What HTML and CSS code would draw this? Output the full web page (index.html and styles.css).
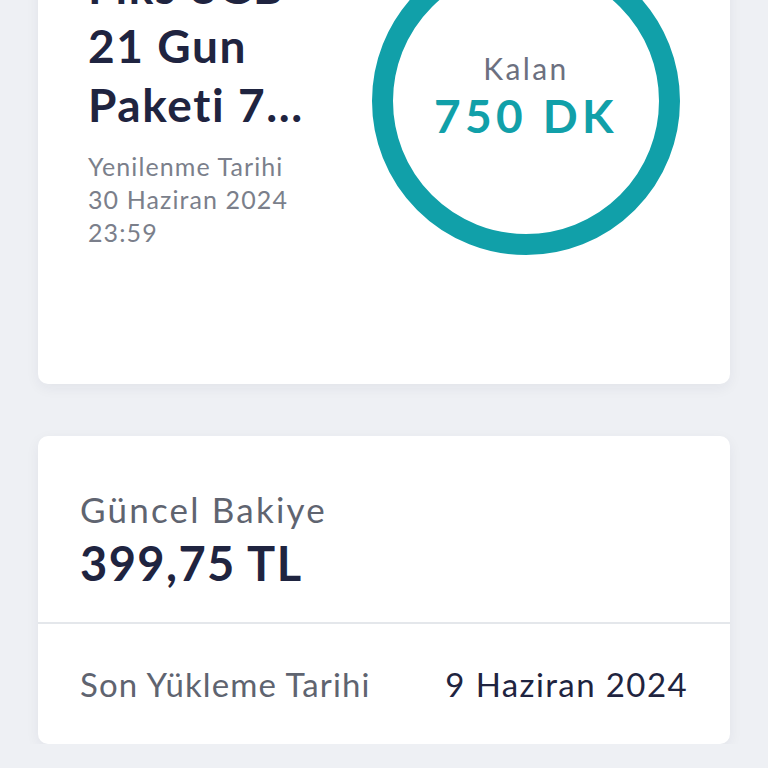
FILE: index.html
```html
<!DOCTYPE html>
<html lang="tr">
<head>
  <meta charset="UTF-8">
  <title>Paketlerim</title>
  <link rel="stylesheet" href="styles.css">
</head>
<body>
  <div class="page">

    <div class="card package">
      <div class="package-info">
        <h2 class="package-name">Fiks 8GB<br>21 Gun<br>Paketi 7...</h2>
        <p class="renew">Yenilenme Tarihi<br>30 Haziran 2024<br>23:59</p>
      </div>
      <div class="usage">
        <svg class="ring" width="308" height="308" viewBox="0 0 308 308">
          <circle cx="154" cy="154" r="143.5" fill="none" stroke="#11a0a9" stroke-width="21" />
        </svg>
        <div class="usage-text">
          <span class="usage-label">Kalan</span>
          <span class="usage-value">750 DK</span>
        </div>
      </div>
    </div>

    <div class="card balance">
      <div class="balance-top">
        <div class="balance-label">Güncel Bakiye</div>
        <div class="balance-value">399,75 TL</div>
      </div>
      <div class="balance-row">
        <span class="row-label">Son Yükleme Tarihi</span>
        <span class="row-value">9 Haziran 2024</span>
      </div>
    </div>

  </div>
</body>
</html>
```

FILE: styles.css
```css
* {
  box-sizing: border-box;
  margin: 0;
  padding: 0;
  font-family: 'Lato', 'Noto Sans', sans-serif;
}

body {
  background: #eef0f4;
  overflow: hidden;
}

.page {
  margin-top: -83px;
  padding: 0 38px;
  display: flex;
  flex-direction: column;
  gap: 52px;
}

.card {
  background: #fff;
  border-radius: 10px;
  box-shadow: 0 4px 14px rgba(30, 40, 60, 0.06);
}

/* paket karti */
.package {
  display: flex;
  justify-content: space-between;
  align-items: flex-start;
  padding: 30px 50px 129px 50px;
}

.package-name {
  margin-top: 10px;
  color: #1f2440;
  font-size: 46px;
  line-height: 59px;
  font-weight: 700;
  letter-spacing: 1.6px;
}

.renew {
  margin-top: 16px;
  color: #7b7f8b;
  font-size: 25px;
  line-height: 33px;
  letter-spacing: 1.1px;
}

.usage {
  position: relative;
  width: 308px;
  height: 308px;
}

.ring {
  display: block;
}

.usage-text {
  position: absolute;
  inset: 0;
  display: flex;
  flex-direction: column;
  align-items: center;
  justify-content: center;
  padding-bottom: 10px;
}

.usage-label {
  color: #6c7080;
  font-size: 30px;
  line-height: 40px;
  letter-spacing: 2.4px;
}

.usage-value {
  color: #11a0a9;
  font-size: 46px;
  line-height: 56px;
  font-weight: 700;
  letter-spacing: 4.4px;
}

/* bakiye karti */
.balance-top {
  padding: 52px 42px 31px;
  border-bottom: 2px solid #e4e7eb;
}

.balance-label {
  color: #5f6470;
  font-size: 35px;
  line-height: 42px;
  letter-spacing: 2.2px;
}

.balance-value {
  margin-top: 5px;
  color: #1f2440;
  font-size: 47px;
  line-height: 56px;
  font-weight: 700;
  letter-spacing: 1.4px;
}

.balance-row {
  display: flex;
  justify-content: space-between;
  padding: 40px 42px 40px;
  font-size: 33px;
  line-height: 40px;
}

.row-label {
  color: #5f6470;
  letter-spacing: 1.1px;
}

.row-value {
  color: #1f2440;
  letter-spacing: 1.4px;
}
```
